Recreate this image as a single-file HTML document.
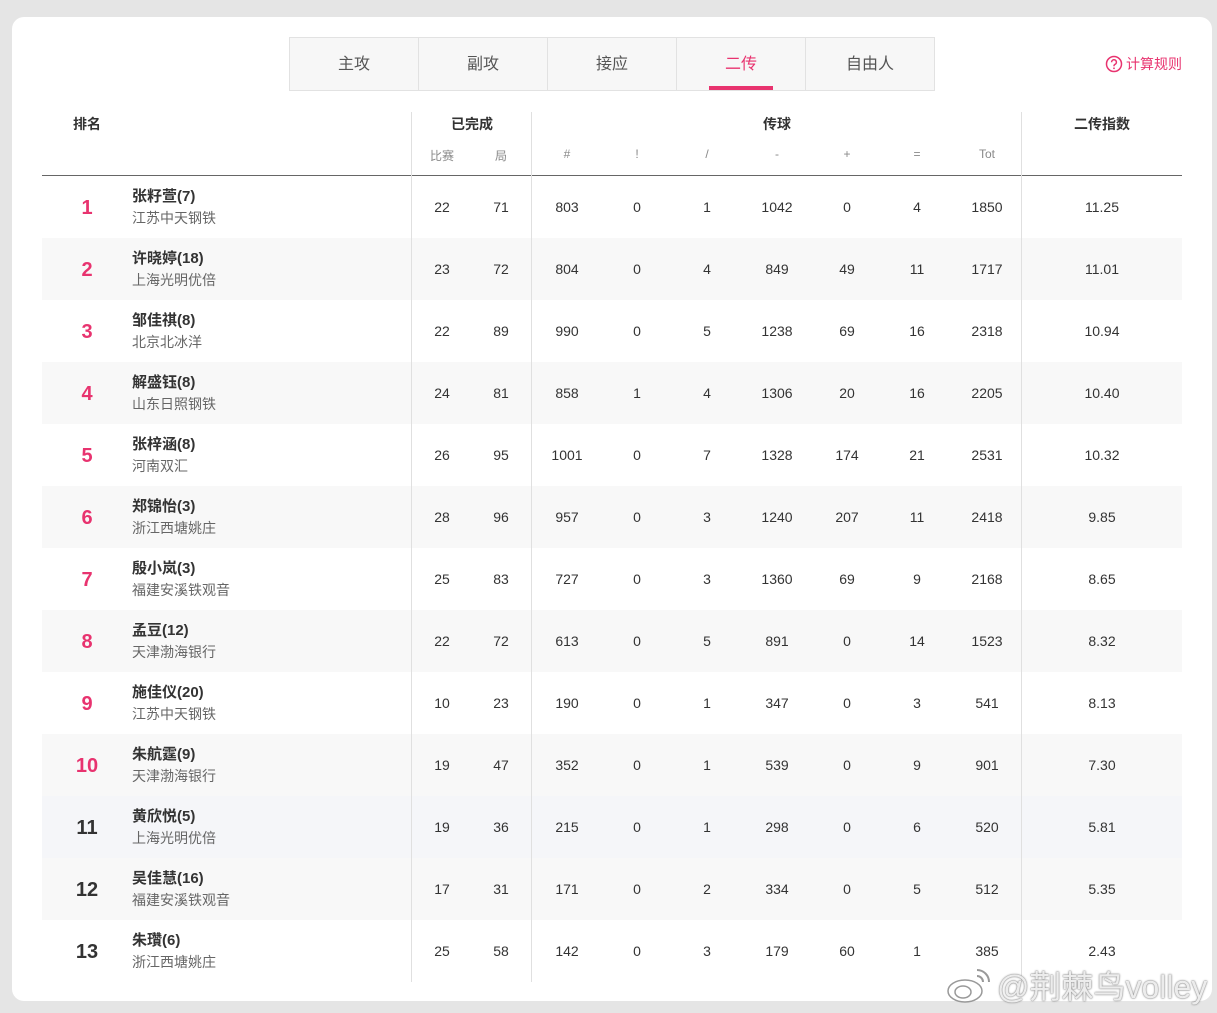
<!DOCTYPE html>
<html><head><meta charset="utf-8"><style>
*{margin:0;padding:0;box-sizing:border-box}
body{width:1217px;height:1013px;background:#e5e5e5;font-family:"Liberation Sans","Noto Sans CJK SC",sans-serif;position:relative;overflow:hidden;color:#333}
.card{position:absolute;left:12px;top:17px;width:1200px;height:984px;background:#fff;border-radius:12px}
.tabs{position:absolute;left:289px;top:37px;width:646px;height:54px;border:1px solid #e2e2e2;background:#f7f7f7;display:flex}
.tab{flex:1;text-align:center;line-height:54px;font-size:16px;color:#555;border-right:1px solid #e2e2e2;position:relative}
.tab:last-child{border-right:none}
.tab.on{color:#e8336f}
.tab.on:after{content:"";position:absolute;left:32px;right:32px;bottom:0;height:4px;background:#e8336f}
.rule{position:absolute;left:1105px;top:54px;font-size:14px;color:#e8336f;display:flex;align-items:center;gap:3px}
.a{position:absolute;text-align:center;width:80px}
.h1{font-size:14px;font-weight:bold;color:#333;top:114px}
.h2{font-size:12px;color:#888;top:147px}
.vl{position:absolute;width:1px;background:#e0e0e0;top:112px;height:870px}
.hl{position:absolute;left:42px;width:1140px;top:175px;height:1px;background:#666}
.row{position:absolute;left:42px;width:1140px;height:62px}
.row.g{background:#f8f8f8}
.row.b{background:#f5f6f9}
.rk{position:absolute;left:25px;width:40px;text-align:center;top:21px;font-size:20px;font-weight:bold;color:#e8336f}
.rk.k{color:#333}
.nm{position:absolute;left:90px;top:9px;font-size:15px;font-weight:bold;color:#333}
.tm{position:absolute;left:90px;top:32px;font-size:14px;color:#666}
.c{position:absolute;top:23px;width:80px;text-align:center;font-size:14px;color:#333}
</style></head><body>
<div class="card"></div>
<div class="tabs"><div class="tab">主攻</div><div class="tab">副攻</div><div class="tab">接应</div><div class="tab on">二传</div><div class="tab">自由人</div></div>
<div class="rule"><svg width="18" height="18" viewBox="0 0 18 18"><circle cx="9" cy="9" r="7.5" fill="none" stroke="#e8336f" stroke-width="1.5"/><path d="M6.6 7.2a2.4 2.4 0 1 1 3.3 2.2c-.6.3-.9.7-.9 1.4v.5" fill="none" stroke="#e8336f" stroke-width="1.5"/><circle cx="9" cy="13.3" r=".9" fill="#e8336f"/></svg>计算规则</div>

<div class="a h1" style="left:47px">排名</div>
<div class="a h1" style="left:432px">已完成</div>
<div class="a h1" style="left:737px">传球</div>
<div class="a h1" style="left:1062px">二传指数</div>
<div class="a h2" style="left:402px">比赛</div><div class="a h2" style="left:461px">局</div>
<div class="a h2" style="left:527px">#</div><div class="a h2" style="left:597px">!</div><div class="a h2" style="left:667px">/</div><div class="a h2" style="left:737px">-</div><div class="a h2" style="left:807px">+</div><div class="a h2" style="left:877px">=</div><div class="a h2" style="left:947px">Tot</div>

<div class="row" style="top:176px"><div class="rk">1</div><div class="nm">张籽萱(7)</div><div class="tm">江苏中天钢铁</div></div>
<div class="row g" style="top:238px"><div class="rk">2</div><div class="nm">许晓婷(18)</div><div class="tm">上海光明优倍</div></div>
<div class="row" style="top:300px"><div class="rk">3</div><div class="nm">邹佳祺(8)</div><div class="tm">北京北冰洋</div></div>
<div class="row g" style="top:362px"><div class="rk">4</div><div class="nm">解盛钰(8)</div><div class="tm">山东日照钢铁</div></div>
<div class="row" style="top:424px"><div class="rk">5</div><div class="nm">张梓涵(8)</div><div class="tm">河南双汇</div></div>
<div class="row g" style="top:486px"><div class="rk">6</div><div class="nm">郑锦怡(3)</div><div class="tm">浙江西塘姚庄</div></div>
<div class="row" style="top:548px"><div class="rk">7</div><div class="nm">殷小岚(3)</div><div class="tm">福建安溪铁观音</div></div>
<div class="row g" style="top:610px"><div class="rk">8</div><div class="nm">孟豆(12)</div><div class="tm">天津渤海银行</div></div>
<div class="row" style="top:672px"><div class="rk">9</div><div class="nm">施佳仪(20)</div><div class="tm">江苏中天钢铁</div></div>
<div class="row g" style="top:734px"><div class="rk">10</div><div class="nm">朱航霆(9)</div><div class="tm">天津渤海银行</div></div>
<div class="row b" style="top:796px"><div class="rk k">11</div><div class="nm">黄欣悦(5)</div><div class="tm">上海光明优倍</div></div>
<div class="row g" style="top:858px"><div class="rk k">12</div><div class="nm">吴佳慧(16)</div><div class="tm">福建安溪铁观音</div></div>
<div class="row" style="top:920px"><div class="rk k">13</div><div class="nm">朱瓚(6)</div><div class="tm">浙江西塘姚庄</div></div>

<div class="hl"></div>
<div class="vl" style="left:411px"></div><div class="vl" style="left:531px"></div><div class="vl" style="left:1021px"></div>

<div style="position:absolute;left:0;top:0">
<div class="c" style="top:199px;left:402px">22</div><div class="c" style="top:199px;left:461px">71</div><div class="c" style="top:199px;left:527px">803</div><div class="c" style="top:199px;left:597px">0</div><div class="c" style="top:199px;left:667px">1</div><div class="c" style="top:199px;left:737px">1042</div><div class="c" style="top:199px;left:807px">0</div><div class="c" style="top:199px;left:877px">4</div><div class="c" style="top:199px;left:947px">1850</div><div class="c" style="top:199px;left:1062px">11.25</div>
<div class="c" style="top:261px;left:402px">23</div><div class="c" style="top:261px;left:461px">72</div><div class="c" style="top:261px;left:527px">804</div><div class="c" style="top:261px;left:597px">0</div><div class="c" style="top:261px;left:667px">4</div><div class="c" style="top:261px;left:737px">849</div><div class="c" style="top:261px;left:807px">49</div><div class="c" style="top:261px;left:877px">11</div><div class="c" style="top:261px;left:947px">1717</div><div class="c" style="top:261px;left:1062px">11.01</div>
<div class="c" style="top:323px;left:402px">22</div><div class="c" style="top:323px;left:461px">89</div><div class="c" style="top:323px;left:527px">990</div><div class="c" style="top:323px;left:597px">0</div><div class="c" style="top:323px;left:667px">5</div><div class="c" style="top:323px;left:737px">1238</div><div class="c" style="top:323px;left:807px">69</div><div class="c" style="top:323px;left:877px">16</div><div class="c" style="top:323px;left:947px">2318</div><div class="c" style="top:323px;left:1062px">10.94</div>
<div class="c" style="top:385px;left:402px">24</div><div class="c" style="top:385px;left:461px">81</div><div class="c" style="top:385px;left:527px">858</div><div class="c" style="top:385px;left:597px">1</div><div class="c" style="top:385px;left:667px">4</div><div class="c" style="top:385px;left:737px">1306</div><div class="c" style="top:385px;left:807px">20</div><div class="c" style="top:385px;left:877px">16</div><div class="c" style="top:385px;left:947px">2205</div><div class="c" style="top:385px;left:1062px">10.40</div>
<div class="c" style="top:447px;left:402px">26</div><div class="c" style="top:447px;left:461px">95</div><div class="c" style="top:447px;left:527px">1001</div><div class="c" style="top:447px;left:597px">0</div><div class="c" style="top:447px;left:667px">7</div><div class="c" style="top:447px;left:737px">1328</div><div class="c" style="top:447px;left:807px">174</div><div class="c" style="top:447px;left:877px">21</div><div class="c" style="top:447px;left:947px">2531</div><div class="c" style="top:447px;left:1062px">10.32</div>
<div class="c" style="top:509px;left:402px">28</div><div class="c" style="top:509px;left:461px">96</div><div class="c" style="top:509px;left:527px">957</div><div class="c" style="top:509px;left:597px">0</div><div class="c" style="top:509px;left:667px">3</div><div class="c" style="top:509px;left:737px">1240</div><div class="c" style="top:509px;left:807px">207</div><div class="c" style="top:509px;left:877px">11</div><div class="c" style="top:509px;left:947px">2418</div><div class="c" style="top:509px;left:1062px">9.85</div>
<div class="c" style="top:571px;left:402px">25</div><div class="c" style="top:571px;left:461px">83</div><div class="c" style="top:571px;left:527px">727</div><div class="c" style="top:571px;left:597px">0</div><div class="c" style="top:571px;left:667px">3</div><div class="c" style="top:571px;left:737px">1360</div><div class="c" style="top:571px;left:807px">69</div><div class="c" style="top:571px;left:877px">9</div><div class="c" style="top:571px;left:947px">2168</div><div class="c" style="top:571px;left:1062px">8.65</div>
<div class="c" style="top:633px;left:402px">22</div><div class="c" style="top:633px;left:461px">72</div><div class="c" style="top:633px;left:527px">613</div><div class="c" style="top:633px;left:597px">0</div><div class="c" style="top:633px;left:667px">5</div><div class="c" style="top:633px;left:737px">891</div><div class="c" style="top:633px;left:807px">0</div><div class="c" style="top:633px;left:877px">14</div><div class="c" style="top:633px;left:947px">1523</div><div class="c" style="top:633px;left:1062px">8.32</div>
<div class="c" style="top:695px;left:402px">10</div><div class="c" style="top:695px;left:461px">23</div><div class="c" style="top:695px;left:527px">190</div><div class="c" style="top:695px;left:597px">0</div><div class="c" style="top:695px;left:667px">1</div><div class="c" style="top:695px;left:737px">347</div><div class="c" style="top:695px;left:807px">0</div><div class="c" style="top:695px;left:877px">3</div><div class="c" style="top:695px;left:947px">541</div><div class="c" style="top:695px;left:1062px">8.13</div>
<div class="c" style="top:757px;left:402px">19</div><div class="c" style="top:757px;left:461px">47</div><div class="c" style="top:757px;left:527px">352</div><div class="c" style="top:757px;left:597px">0</div><div class="c" style="top:757px;left:667px">1</div><div class="c" style="top:757px;left:737px">539</div><div class="c" style="top:757px;left:807px">0</div><div class="c" style="top:757px;left:877px">9</div><div class="c" style="top:757px;left:947px">901</div><div class="c" style="top:757px;left:1062px">7.30</div>
<div class="c" style="top:819px;left:402px">19</div><div class="c" style="top:819px;left:461px">36</div><div class="c" style="top:819px;left:527px">215</div><div class="c" style="top:819px;left:597px">0</div><div class="c" style="top:819px;left:667px">1</div><div class="c" style="top:819px;left:737px">298</div><div class="c" style="top:819px;left:807px">0</div><div class="c" style="top:819px;left:877px">6</div><div class="c" style="top:819px;left:947px">520</div><div class="c" style="top:819px;left:1062px">5.81</div>
<div class="c" style="top:881px;left:402px">17</div><div class="c" style="top:881px;left:461px">31</div><div class="c" style="top:881px;left:527px">171</div><div class="c" style="top:881px;left:597px">0</div><div class="c" style="top:881px;left:667px">2</div><div class="c" style="top:881px;left:737px">334</div><div class="c" style="top:881px;left:807px">0</div><div class="c" style="top:881px;left:877px">5</div><div class="c" style="top:881px;left:947px">512</div><div class="c" style="top:881px;left:1062px">5.35</div>
<div class="c" style="top:943px;left:402px">25</div><div class="c" style="top:943px;left:461px">58</div><div class="c" style="top:943px;left:527px">142</div><div class="c" style="top:943px;left:597px">0</div><div class="c" style="top:943px;left:667px">3</div><div class="c" style="top:943px;left:737px">179</div><div class="c" style="top:943px;left:807px">60</div><div class="c" style="top:943px;left:877px">1</div><div class="c" style="top:943px;left:947px">385</div><div class="c" style="top:943px;left:1062px">2.43</div>
</div>

<div style="position:absolute;left:945px;top:962px;display:flex;align-items:center;gap:4px;color:rgba(255,255,255,.85);font-size:32px;text-shadow:0 0 2px #888,0 0 1px #666">
<svg width="48" height="38" viewBox="0 0 48 38"><ellipse cx="20" cy="25" rx="17" ry="11" fill="#fff" stroke="#999" stroke-width="1.5"/><ellipse cx="18" cy="26" rx="8" ry="6" fill="none" stroke="#999" stroke-width="1.5"/><path d="M32 4a12 12 0 0 1 12 12M32 10a6 6 0 0 1 6 6" fill="none" stroke="#999" stroke-width="2"/></svg>
<span>@荆棘鸟volley</span></div>
</body></html>
